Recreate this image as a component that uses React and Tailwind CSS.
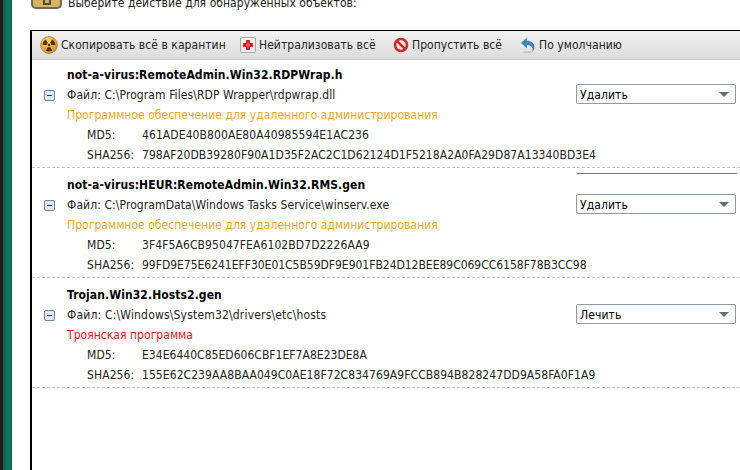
const FONT = "font-['DejaVu_Sans_Condensed','DejaVu_Sans',sans-serif]";

function RadIcon() {
  return (
    <svg width="18" height="18" viewBox="0 0 16 16" className="shrink-0">
      <defs>
        <radialGradient id="rg" cx="40%" cy="30%" r="75%">
          <stop offset="0" stopColor="#ffd970" />
          <stop offset="1" stopColor="#d98a1c" />
        </radialGradient>
      </defs>
      <circle cx="8" cy="8" r="7.5" fill="url(#rg)" stroke="#a8701e" strokeWidth="0.6" />
      <circle cx="8" cy="8" r="1.2" fill="#4a3410" />
      <path d="M2.4 8A5.600 5.600 0 0 1 5.200 3.150L7 6.270A2 2 0 0 0 6 8z" fill="#4a3410" />
      <path d="M10.800 3.150A5.600 5.600 0 0 1 13.600 8L10 8A2 2 0 0 0 9 6.270z" fill="#4a3410" />
      <path d="M10.800 12.850A5.600 5.600 0 0 1 5.200 12.850L7 9.730A2 2 0 0 0 9 9.730z" fill="#4a3410" />
    </svg>
  );
}

function CrossIcon() {
  return (
    <svg width="16" height="16" viewBox="0 0 16 16" className="shrink-0">
      <rect x="0.5" y="0.5" width="15" height="15" rx="1.5" fill="#eeeeee" stroke="#a9a9a9" />
      <path d="M6 3h4v3h3v4h-3v3H6v-3H3V6h3z" fill="#d4232b" />
      <path d="M7 6h2v1h1v2H9v1H7V9H6V7h1z" fill="#e8555a" />
    </svg>
  );
}

function NoIcon() {
  return (
    <svg width="16" height="16" viewBox="0 0 16 16" className="shrink-0">
      <circle cx="8" cy="8" r="6" fill="#f7e8e8" stroke="#cf2a2e" strokeWidth="2.600" />
      <path d="M3.800 3.800l8.400 8.400" stroke="#cf2a2e" strokeWidth="2.600" />
    </svg>
  );
}

function UndoIcon() {
  return (
    <svg width="16" height="16" viewBox="0 0 16 16" className="shrink-0">
      <path d="M2 15.200c3-1.400 8-1.400 11 0-3 1-8 1-11 0z" fill="#c4c4c4" />
      <path d="M1 6 7 .5v3.200c4.500 0 7.500 2.600 7.500 6.300 0 2-.8 3.600-2.300 5 .5-1.300.6-2.500.3-3.500C11.900 9.300 9.800 8 7 8v3.300z" fill="#3d87ba" />
    </svg>
  );
}

function ToolItem({ icon, label, className }) {
  return (
    <div className={`flex items-center gap-[3px] ${className}`}>
      {icon}
      <span className="text-[12px] leading-none text-[#222] tracking-[0.05px]">{label}</span>
    </div>
  );
}

function Select({ value }) {
  return (
    <div className="w-[160px] h-[20px] border border-[#8c9aa6] rounded-[2px] bg-white flex items-center justify-between pl-[3px] pr-[4px]">
      <span className="text-[12px] leading-none text-black pt-[2px]">{value}</span>
      <span className="w-0 h-0 border-l-[5px] border-r-[5px] border-t-[5px] border-l-transparent border-r-transparent border-t-[#6b6b6b] mr-[2px]" />
    </div>
  );
}

function Item({ title, file, fileClass, cat, catColor, md5, md5Class, sha, shaClass, action, line }) {
  return (
    <div className="relative h-[110px] pt-[4px] text-[12px] text-[#222] tracking-[0.09px]">
      {line && <div className="absolute left-[545px] top-[3px] w-[160px] h-px bg-[#777]" />}
      <div className="h-[20px] pl-[35px] pt-[2px] flex items-center font-bold text-black">{title}</div>
      <div className="h-[20px] flex items-center">
        <div className="w-[35px] pl-[12px] pt-[2px] shrink-0">
          <div className="w-[11px] h-[11px] border border-[#6d86a8] rounded-[2px] bg-[#dfe8f3] flex items-center justify-center">
            <div className="w-[5px] h-px bg-[#27384f]" />
          </div>
        </div>
        <span className={`flex-1 pt-[2px] ${fileClass || ""}`}>{file}</span>
        <div className="mr-[4px]"><Select value={action} /></div>
      </div>
      <div className={`h-[20px] pl-[35px] pt-[2px] flex items-center tracking-[0.04px] ${catColor}`}>{cat}</div>
      <div className="h-[20px] pl-[55px] pt-[2px] flex items-center">
        <span className="w-[55px]">MD5:</span><span className={md5Class || ""}>{md5}</span>
      </div>
      <div className="h-[20px] pl-[55px] pt-[2px] flex items-center">
        <span className="w-[55px]">SHA256:</span><span className={shaClass || ""}>{sha}</span>
      </div>
      <div className="mt-[3px] border-b border-dashed border-[#c4c4c4]" />
    </div>
  );
}

export default function App() {
  return (
    <div className={`w-[740px] h-[470px] overflow-hidden flex bg-white ${FONT}`}>
      <div className="w-[3px] bg-[#1c1c1c] shrink-0" />
      <div className="w-px bg-[#4a4a4a] shrink-0" />
      <div className="w-[8px] shrink-0 bg-gradient-to-r from-[#07664a] via-[#0f7a5a] to-[#0a6a4c]" />
      <div className="flex-1 min-w-0 flex flex-col">
        <div className="h-[30px] shrink-0 flex items-start pl-[19px]">
          <div className="w-[31px] h-[9px] rounded-b-[5px] bg-[#d9b45c] border-2 border-t-0 border-[#6e6a5f] shrink-0 flex justify-center">
            <div className="w-[8px] h-[5px] border-2 border-t-0 border-[#4e4a3f]" />
          </div>
          <span className="ml-[6px] text-[12px] leading-[12px] text-[#222] -mt-[3px] tracking-[0.05px]">Выберите действие для обнаруженных объектов:</span>
        </div>
        <div className="ml-[18px] flex-1 border-l-2 border-t border-black flex flex-col min-h-0">
          <div className="h-[29px] shrink-0 flex items-center bg-gradient-to-b from-[#f2f2f2] to-[#dcdcdc] border-b border-[#c8c8c8] pl-[8px]">
            <ToolItem icon={<RadIcon />} label="Скопировать всё в карантин" className="w-[200px]" />
            <ToolItem icon={<CrossIcon />} label="Нейтрализовать всё" className="w-[153px]" />
            <ToolItem icon={<NoIcon />} label="Пропустить всё" className="w-[127px]" />
            <ToolItem icon={<UndoIcon />} label="По умолчанию" />
          </div>
          <Item title="not-a-virus:RemoteAdmin.Win32.RDPWrap.h" file="Файл: C:\Program Files\RDP Wrapper\rdpwrap.dll" cat="Программное обеспечение для удаленного администрирования" catColor="text-[#f7a520]" md5="461ADE40B800AE80A40985594E1AC236" sha="798AF20DB39280F90A1D35F2AC2C1D62124D1F5218A2A0FA29D87A13340BD3E4" shaClass="tracking-[0.07px]" action="Удалить" />
          <Item line title="not-a-virus:HEUR:RemoteAdmin.Win32.RMS.gen" file="Файл: C:\ProgramData\Windows Tasks Service\winserv.exe" cat="Программное обеспечение для удаленного администрирования" catColor="text-[#f7a520]" md5="3F4F5A6CB95047FEA6102BD7D2226AA9" sha="99FD9E75E6241EFF30E01C5B59DF9E901FB24D12BEE89C069CC6158F78B3CC98" shaClass="tracking-[-0.02px]" action="Удалить" />
          <Item title="Trojan.Win32.Hosts2.gen" file="Файл: C:\Windows\System32\drivers\etc\hosts" fileClass="tracking-[0.18px]" cat="Троянская программа" catColor="text-[#e8141c]" md5="E34E6440C85ED606CBF1EF7A8E23DE8A" md5Class="tracking-[0.03px]" sha="155E62C239AA8BAA049C0AE18F72C834769A9FCCB894B828247DD9A58FA0F1A9" shaClass="tracking-[0.07px]" action="Лечить" />
        </div>
      </div>
    </div>
  );
}
